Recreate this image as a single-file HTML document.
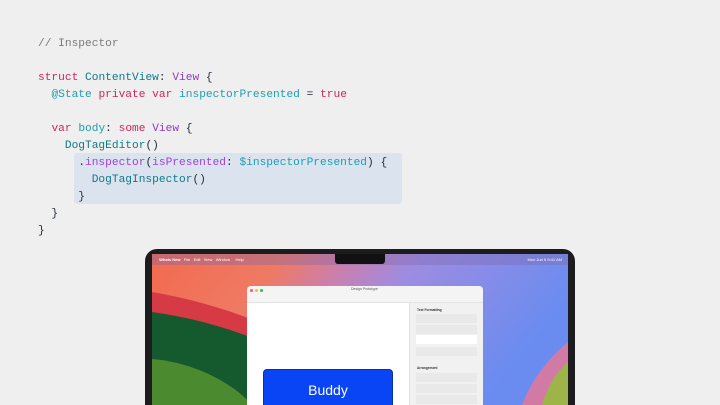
<!DOCTYPE html>
<html><head><style>
*{margin:0;padding:0;box-sizing:border-box}
html,body{width:720px;height:405px;overflow:hidden}
body{background:#efefef;position:relative;font-family:"Liberation Sans",sans-serif}
.code{position:absolute;left:38px;top:36px;font-family:"Liberation Mono",monospace;font-size:11.2px;line-height:17px;color:#1f2a36;white-space:pre}
.c{color:#7a7a7a}.k{color:#d2245e}.t{color:#0e7a8a}.v{color:#8a3cc4}.p{color:#1a9fb0}.m{color:#a043d6}
.hl{position:absolute;left:74px;top:153px;width:328px;height:51px;background:#dbe3ee;border-radius:3px}
.bez{position:absolute;left:145px;top:249px;width:430px;height:160px;background:#1c1c1e;border-radius:12px 12px 0 0}
.scr{position:absolute;left:152px;top:254px;width:416px;height:151px;overflow:hidden}
.menu{position:absolute;left:0;top:0;width:416px;height:11px;background:rgba(120,100,170,.35);color:#fff;font-size:4px;line-height:11px;padding-left:6px}
.notch{position:absolute;left:183px;top:0;width:50px;height:10px;background:#111;border-radius:0 0 3px 3px}
.win{position:absolute;left:95px;top:32px;width:236px;height:130px;background:#fff;border-radius:4px;overflow:hidden}
.tb{height:17px;background:#f4f4f4;border-bottom:1px solid #e4e4e4;position:relative}
.dot{position:absolute;top:3px;width:3px;height:3px;border-radius:50%}
.insp{position:absolute;left:162px;top:17px;width:74px;height:120px;background:#f1f1f1;border-left:1px solid #e2e2e2;font-size:3.3px;color:#333}
.row{position:absolute;left:6px;right:6px;height:9px;background:#e9e9e9}
.btn{position:absolute;left:16px;top:83px;width:130px;height:50px;background:#0a45f5;border-radius:4px;border:1px solid #0a2fa0;color:#fff;font-size:14px;text-align:center;padding-top:12px}
</style></head><body>
<div class="hl"></div>
<div class="code"><span class="c">// Inspector</span>

<span class="k">struct</span> <span class="t">ContentView</span>: <span class="v">View</span> {
  <span class="p">@State</span> <span class="k">private</span> <span class="k">var</span> <span class="p">inspectorPresented</span> = <span class="k">true</span>

  <span class="k">var</span> <span class="p">body</span>: <span class="k">some</span> <span class="v">View</span> {
    <span class="t">DogTagEditor</span>()
      .<span class="m">inspector</span>(<span class="m">isPresented</span>: <span class="p">$inspectorPresented</span>) {
        <span class="t">DogTagInspector</span>()
      }
  }
}</div>
<div class="bez"></div>
<div class="scr">
<svg width="416" height="151" style="position:absolute;left:0;top:0">
<defs><linearGradient id="g" x1="0" y1="0" x2="1" y2="0.3">
<stop offset="0" stop-color="#f26a4e"/><stop offset="0.3" stop-color="#ef7a64"/><stop offset="0.45" stop-color="#c97fb0"/><stop offset="0.6" stop-color="#9d8ce2"/><stop offset="1" stop-color="#6a8cf0"/></linearGradient></defs>
<rect width="416" height="151" fill="url(#g)"/>
<path d="M0,38 C60,48 120,70 175,100 L175,151 L0,151Z" fill="#d63a45"/>
<path d="M0,58 C60,66 120,88 175,118 L175,151 L0,151Z" fill="#145a2e"/>
<path d="M0,105 C40,108 80,128 100,151 L0,151Z" fill="#4c8a30"/>
<path d="M416,88 C392,108 378,130 370,151 L416,151Z" fill="#d27aa6"/>
<path d="M416,108 C400,122 394,138 390,151 L416,151Z" fill="#9cb448"/>
</svg>
<div class="menu"> &nbsp;<b>Whats New</b> &nbsp; File &nbsp; Edit &nbsp; View &nbsp; Window &nbsp; &nbsp; Help<span style="position:absolute;right:6px">Mon Jun 5 9:41 AM</span></div>
<div class="notch"></div>
<div class="win">
<div class="tb"><div class="dot" style="left:3px;background:#fe5f57"></div><div class="dot" style="left:8px;background:#febc2e"></div><div class="dot" style="left:13px;background:#28c840"></div><div style="position:absolute;left:104px;top:1px;font-size:3.5px;color:#555">Design Prototype</div></div>
<div class="insp">
<div style="position:absolute;left:7px;top:5px;font-weight:bold">Text Formatting</div>
<div class="row" style="top:11px"></div><div class="row" style="top:22px"></div><div class="row" style="top:32px;background:#fff"></div><div class="row" style="top:44px"></div>
<div style="position:absolute;left:7px;top:63px;font-weight:bold">Arrangement</div>
<div class="row" style="top:70px"></div><div class="row" style="top:81px"></div><div class="row" style="top:92px"></div>
</div>
<div class="btn">Buddy</div>
</div>
</div>
</body></html>
